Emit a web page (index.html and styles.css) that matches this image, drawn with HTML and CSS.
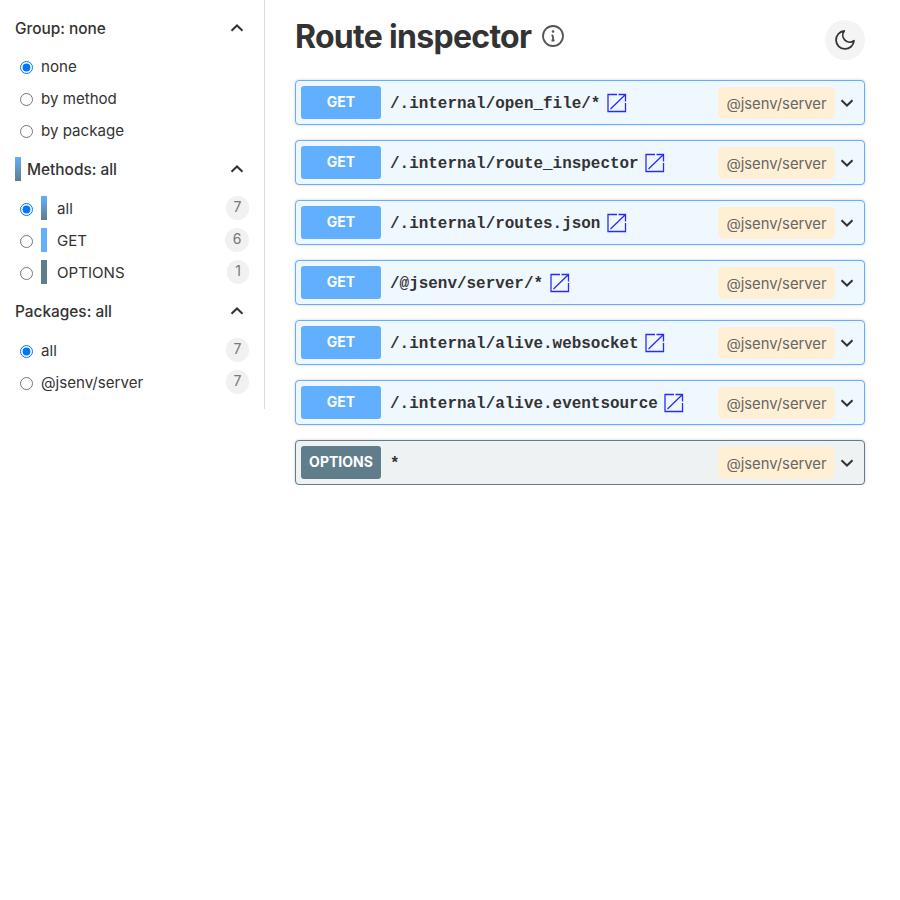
FILE: index.html
```html
<!DOCTYPE html>
<html lang="en">
<head>
  <meta charset="UTF-8">
  <meta name="viewport" content="width=device-width, initial-scale=1.0">
  <title>Route inspector</title>
  <link rel="stylesheet" href="styles.css">
</head>
<body>
  <aside class="sidebar">
    <section class="section">
      <div class="section-header">
        <span class="section-title">Group: none</span>
        <svg class="chevron" viewBox="0 0 14 8"><path d="M1.5 6.8 7 1.5l5.500 5.300"/></svg>
      </div>
      <div class="options">
        <label class="option"><input type="radio" name="group" checked><span>none</span></label>
        <label class="option"><input type="radio" name="group"><span>by method</span></label>
        <label class="option"><input type="radio" name="group"><span>by package</span></label>
      </div>
    </section>

    <section class="section">
      <div class="section-header">
        <span class="section-title"><i class="color-bar bar-all"></i>Methods: all</span>
        <svg class="chevron" viewBox="0 0 14 8"><path d="M1.5 6.8 7 1.5l5.500 5.300"/></svg>
      </div>
      <div class="options">
        <label class="option"><input type="radio" name="method" checked><i class="color-bar bar-all"></i><span>all</span><span class="count">7</span></label>
        <label class="option"><input type="radio" name="method"><i class="color-bar bar-get"></i><span>GET</span><span class="count">6</span></label>
        <label class="option"><input type="radio" name="method"><i class="color-bar bar-options"></i><span>OPTIONS</span><span class="count">1</span></label>
      </div>
    </section>

    <section class="section">
      <div class="section-header">
        <span class="section-title">Packages: all</span>
        <svg class="chevron" viewBox="0 0 14 8"><path d="M1.5 6.8 7 1.5l5.500 5.300"/></svg>
      </div>
      <div class="options">
        <label class="option"><input type="radio" name="package" checked><span>all</span><span class="count">7</span></label>
        <label class="option"><input type="radio" name="package"><span>@jsenv/server</span><span class="count">7</span></label>
      </div>
    </section>
  </aside>

  <main class="main">
    <header class="page-header">
      <h1>Route inspector</h1>
      <svg class="info-icon" viewBox="0 0 24 24"><circle cx="12" cy="12" r="10"/><path d="M12 16.500v-5M10.500 11.500H12M10.500 16.500h3"/><circle class="info-dot" cx="12" cy="7.500" r="1.300"/></svg>
      <button class="theme-button" type="button">
        <svg viewBox="0 0 24 24"><path d="M21 12.790A9 9 0 1 1 11.210 3 7 7 0 0 0 21 12.790z"/></svg>
      </button>
    </header>

    <div class="routes">
      <div class="route">
        <span class="method">GET</span>
        <span class="url">/.internal/open_file/*</span>
        <svg class="link-icon" viewBox="0 0 20 20"><path d="M10 1.500H1v17h17.500V10M3.500 16 18 2M11.500 1.500h7v7"/></svg>
        <span class="package">@jsenv/server</span>
        <svg class="toggle" viewBox="0 0 14 8"><path d="M1.500 1.200 7 6.500l5.500-5.300"/></svg>
      </div>
      <div class="route">
        <span class="method">GET</span>
        <span class="url">/.internal/route_inspector</span>
        <svg class="link-icon" viewBox="0 0 20 20"><path d="M10 1.500H1v17h17.500V10M3.500 16 18 2M11.500 1.500h7v7"/></svg>
        <span class="package">@jsenv/server</span>
        <svg class="toggle" viewBox="0 0 14 8"><path d="M1.500 1.200 7 6.500l5.500-5.300"/></svg>
      </div>
      <div class="route">
        <span class="method">GET</span>
        <span class="url">/.internal/routes.json</span>
        <svg class="link-icon" viewBox="0 0 20 20"><path d="M10 1.500H1v17h17.500V10M3.500 16 18 2M11.500 1.500h7v7"/></svg>
        <span class="package">@jsenv/server</span>
        <svg class="toggle" viewBox="0 0 14 8"><path d="M1.500 1.200 7 6.500l5.500-5.300"/></svg>
      </div>
      <div class="route">
        <span class="method">GET</span>
        <span class="url">/@jsenv/server/*</span>
        <svg class="link-icon" viewBox="0 0 20 20"><path d="M10 1.500H1v17h17.500V10M3.500 16 18 2M11.500 1.500h7v7"/></svg>
        <span class="package">@jsenv/server</span>
        <svg class="toggle" viewBox="0 0 14 8"><path d="M1.500 1.200 7 6.500l5.500-5.300"/></svg>
      </div>
      <div class="route">
        <span class="method">GET</span>
        <span class="url">/.internal/alive.websocket</span>
        <svg class="link-icon" viewBox="0 0 20 20"><path d="M10 1.500H1v17h17.500V10M3.500 16 18 2M11.500 1.500h7v7"/></svg>
        <span class="package">@jsenv/server</span>
        <svg class="toggle" viewBox="0 0 14 8"><path d="M1.500 1.200 7 6.500l5.500-5.300"/></svg>
      </div>
      <div class="route">
        <span class="method">GET</span>
        <span class="url">/.internal/alive.eventsource</span>
        <svg class="link-icon" viewBox="0 0 20 20"><path d="M10 1.500H1v17h17.500V10M3.500 16 18 2M11.500 1.500h7v7"/></svg>
        <span class="package">@jsenv/server</span>
        <svg class="toggle" viewBox="0 0 14 8"><path d="M1.500 1.200 7 6.500l5.500-5.300"/></svg>
      </div>
      <div class="route route-options">
        <span class="method">OPTIONS</span>
        <span class="url">*</span>
        <span class="package">@jsenv/server</span>
        <svg class="toggle" viewBox="0 0 14 8"><path d="M1.500 1.200 7 6.500l5.500-5.300"/></svg>
      </div>
    </div>
  </main>
</body>
</html>
```

FILE: styles.css
```css
* {
  box-sizing: border-box;
}

body {
  display: flex;
  align-items: flex-start;
  margin: 0;
  font-family: Inter, "Noto Sans", sans-serif;
  color: #333;
  background-color: #fff;
}

/* sidebar */
.sidebar {
  width: 265px;
  height: 409px;
  padding: 8px 15px 0;
  border-right: 1px solid #ddd;
}
.section + .section {
  margin-top: 3px;
}
.section + .section .options {
  margin-top: 3px;
}
.section-header {
  display: flex;
  align-items: center;
  justify-content: space-between;
  height: 40px;
  padding-right: 5px;
}
.section-title {
  display: flex;
  align-items: center;
  font-size: 15.400px;
  font-weight: 500;
}
.chevron {
  width: 14px;
  height: 8px;
  fill: none;
  stroke: #333;
  stroke-width: 2;
}
.options {
  margin-top: 2px;
}
.option {
  display: flex;
  align-items: center;
  height: 32px;
  padding-left: 5px;
  font-size: 15.100px;
}
.option input {
  flex: none;
  width: 13px;
  height: 13px;
  margin: 2px 8px 0 0;
}
.color-bar {
  flex: none;
  width: 6px;
  height: 24px;
  margin-right: 10px;
}
.section-title .color-bar {
  margin-right: 6px;
}
.bar-all {
  background: linear-gradient(#61affe, #607d8b);
}
.bar-get {
  background-color: #61affe;
}
.bar-options {
  background-color: #607d8b;
}
.count {
  min-width: 22px;
  height: 24px;
  margin-left: auto;
  padding: 0 7.500px;
  border-radius: 12px;
  background-color: #f1f1f1;
  color: #777;
  font-size: 14px;
  line-height: 22px;
  text-align: center;
}

/* main */
.main {
  width: 600px;
  padding: 20px 0 0 30px;
}
.page-header {
  display: flex;
  align-items: flex-start;
  height: 60px;
}
h1 {
  margin: 0;
  font-size: 32px;
  font-weight: 700;
  line-height: 34px;
  letter-spacing: -0.700px;
}
.info-icon {
  width: 24px;
  height: 24px;
  margin: 4px 0 0 10px;
  fill: none;
  stroke: #555;
  stroke-width: 1.800;
}
.info-dot {
  fill: #555;
  stroke: none;
}
.theme-button {
  display: flex;
  align-items: center;
  justify-content: center;
  width: 40px;
  height: 40px;
  margin-left: auto;
  padding: 0;
  border: none;
  border-radius: 50%;
  background-color: #f4f4f4;
}
.theme-button svg {
  width: 24px;
  height: 24px;
  fill: none;
  stroke: #333;
  stroke-width: 1.800;
  stroke-linecap: round;
  stroke-linejoin: round;
}
.routes {
  display: flex;
  flex-direction: column;
  gap: 15px;
}
.route {
  display: flex;
  align-items: center;
  height: 45px;
  padding: 0 10px 0 5px;
  border: 1px solid #61affe;
  border-radius: 4px;
  background-color: #eff7ff;
  box-shadow: 0 0 3px rgba(0, 0, 0, 0.19);
}
.method {
  flex: none;
  width: 80px;
  height: 33px;
  margin-right: 9px;
  border-radius: 3px;
  background-color: #61affe;
  color: #fff;
  font-size: 14px;
  font-weight: 700;
  line-height: 31px;
  text-align: center;
}
.url {
  padding-top: 2px;
  font-family: "Liberation Mono", "DejaVu Sans Mono", monospace;
  font-size: 15.950px;
  font-weight: 700;
}
.link-icon {
  flex: none;
  width: 20px;
  height: 20px;
  margin-left: 6.500px;
  fill: none;
  stroke: #2a2aff;
  stroke-width: 1.300;
}
.package {
  flex: none;
  width: 117px;
  height: 32px;
  margin-left: auto;
  border-radius: 5px;
  background-color: #fff0d5;
  color: #666;
  font-size: 14.800px;
  line-height: 34px;
  text-align: center;
}
.toggle {
  flex: none;
  width: 14px;
  height: 8px;
  margin-left: 5px;
  fill: none;
  stroke: #333;
  stroke-width: 2;
}
.route-options {
  border-color: #607d8b;
  background-color: #eff2f3;
}
.route-options .method {
  background-color: #607d8b;
}
```
